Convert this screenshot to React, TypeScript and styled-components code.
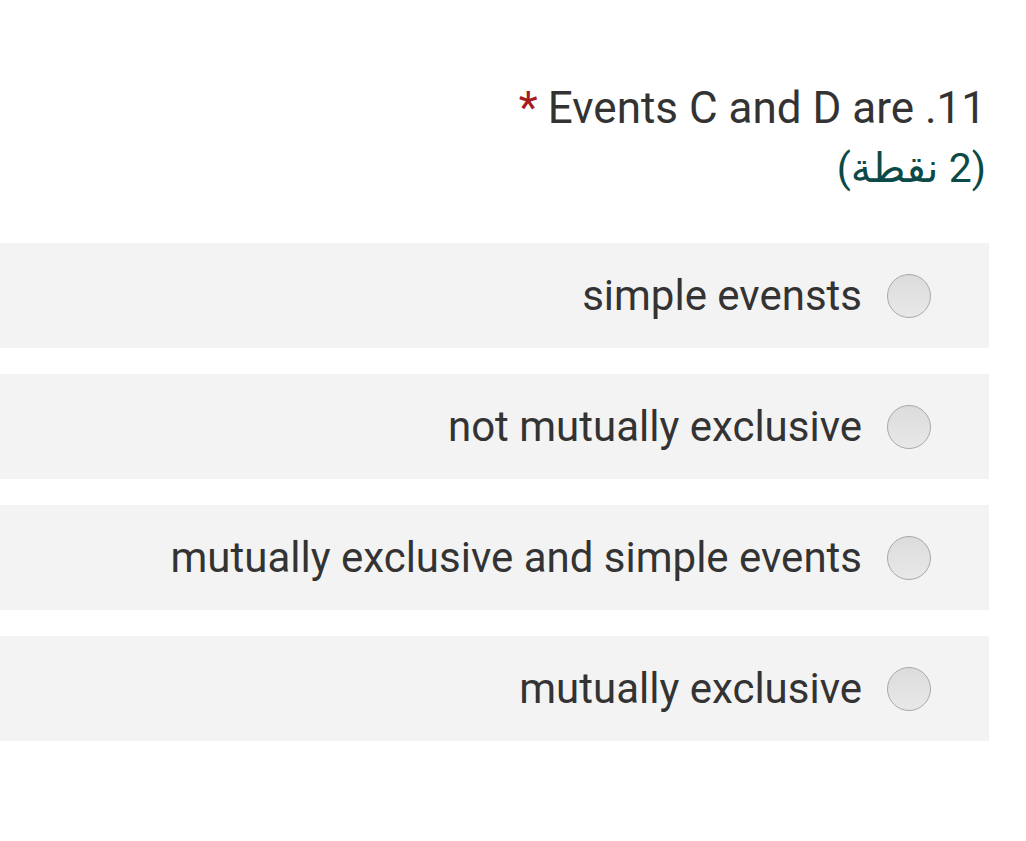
import React from "react";
import styled, { createGlobalStyle } from "styled-components";

const Global = createGlobalStyle`
  html, body { margin: 0; padding: 0; background: #ffffff; }
  body { font-family: Roboto, "Noto Sans", Arial, sans-serif; }
`;

const Page = styled.div`
  direction: rtl;
  padding: 79px 37px 0 0;
  width: 1026px;
  box-sizing: border-box;
`;

const Header = styled.div`
  padding-right: 3px;
  margin-bottom: 44px;
`;

const Title = styled.div`
  font-size: 44px;
  line-height: 58px;
  color: #333333;
`;

const Star = styled.span`
  color: #a61b1b;
  margin-right: 10px;
`;

const Points = styled.div`
  font-size: 41px;
  line-height: 62px;
  color: #0c4a47;
  font-family: Roboto, "Noto Sans", "DejaVu Sans", sans-serif;
`;

const Options = styled.div`
  display: flex;
  flex-direction: column;
  gap: 26px;
`;

const Row = styled.label`
  display: flex;
  align-items: center;
  gap: 25px;
  height: 105px;
  background: #f3f3f3;
  padding-right: 58px;
`;

const Radio = styled.span`
  width: 44px;
  height: 44px;
  box-sizing: border-box;
  border-radius: 50%;
  border: 1.5px solid #a9a9a9;
  background: linear-gradient(#dcdcdc, #e8e8e8);
  flex-shrink: 0;
`;

const OptionText = styled.span`
  font-size: 42px;
  color: #333333;
`;

const options = [
  "simple evensts",
  "not mutually exclusive",
  "mutually exclusive and simple events",
  "mutually exclusive",
];

export default function App() {
  return (
    <>
      <Global />
      <Page>
        <Header>
          <Title>
            11. Events C and D are<Star>*</Star>
          </Title>
          <Points>(2 نقطة)</Points>
        </Header>
        <Options>
          {options.map((o) => (
            <Row key={o}>
              <Radio />
              <OptionText>{o}</OptionText>
            </Row>
          ))}
        </Options>
      </Page>
    </>
  );
}
